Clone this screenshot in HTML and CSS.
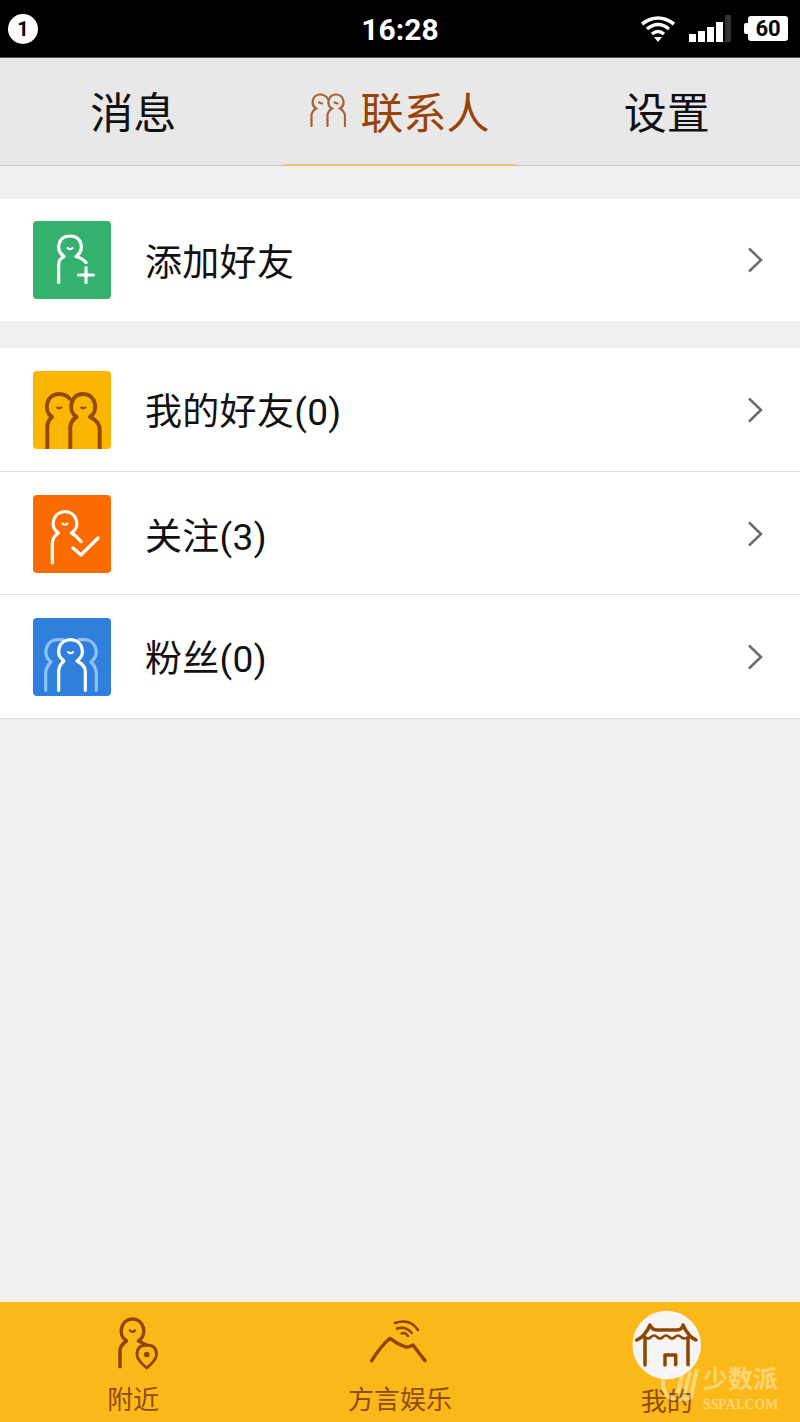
FILE: index.html
```html
<!DOCTYPE html>
<html lang="zh-CN">
<head>
    <meta charset="UTF-8">
    <meta name="viewport" content="width=device-width, initial-scale=1.0">
    <title>联系人</title>
    <link rel="stylesheet" href="styles.css">
</head>
<body>
    <div class="status">
        <span class="badge">1</span>
        <span class="time">16:28</span>
        <div class="status-right">
            <svg class="wifi" width="36" height="28" viewBox="0 0 36 28">
                <path d="M2 9 Q18 -3 34 9 M7 14 Q18 5 29 14 M12 19 Q18 14 24 19" />
                <path class="wifi-dot" d="M14 22 H22 L18 27 Z" />
            </svg>
            <div class="signal">
                <i class="bar1"></i><i class="bar2"></i><i class="bar3"></i><i class="bar4"></i><i class="bar5"></i>
            </div>
            <div class="battery"><span>60</span></div>
        </div>
    </div>

    <div class="tabs">
        <div class="tab">消息</div>
        <div class="tab active">
            <svg class="tab-icon" width="36" height="34" viewBox="0 0 36 34">
                <path d="M1.5 33 V22 Q2 18 6 15.5 C0.5 12 2 1.5 10 1.5 C14 1.5 16.5 3.5 18 6" />
                <path d="M17.5 33 V22 Q18 18 22 15.5 C16 12 18 1.5 26 1.5 C34 1.5 36 12 30 15.5 Q34.5 18 35 23 V33" />
                <path d="M9 9.5 L12 10.5 M24.5 9.5 L27.5 10.5" />
            </svg>
            联系人
        </div>
        <div class="tab">设置</div>
    </div>

    <main class="content">
        <div class="group first">
            <div class="row single">
                <div class="row-icon green">
                    <svg width="78" height="78" viewBox="0 0 78 78">
                        <path d="M25.7 61.5 V43 Q26 38 31 35.5 C22 29 25 15 37 15 C49 15 52 29 43 35.5 Q50 37.5 53 41.5" />
                        <path d="M53 46.5 V61.5 M45.5 54 H60.5" />
                        <path class="thin" d="M34.5 27 Q37 29.5 39.5 27" />
                    </svg>
                </div>
                <span class="row-text">添加好友</span>
                <svg class="chevron" width="16" height="26" viewBox="0 0 16 26"><path d="M2 1.5 L14 13 L2 24.5" /></svg>
            </div>
        </div>

        <div class="group">
            <div class="row">
                <div class="row-icon yellow">
                    <svg width="78" height="78" viewBox="0 0 78 78">
                        <path d="M14.3 78 V56 Q14.5 50 19 46 C10 40 13 23 26 23 C31 23 35 25 37.5 29" />
                        <path d="M37.3 78 V56 Q37.5 50 43.5 46 C34.5 40 37 23 50 23 C63 23 66 40 57 46 Q66 50 66.7 58 V78" />
                        <path class="thin" d="M23.5 36 Q26 38.5 29 36 M47.5 36 Q50 38.5 53 36" />
                    </svg>
                </div>
                <span class="row-text">我的好友(0)</span>
                <svg class="chevron" width="16" height="26" viewBox="0 0 16 26"><path d="M2 1.5 L14 13 L2 24.5" /></svg>
            </div>
            <div class="row short">
                <div class="row-icon orange">
                    <svg width="78" height="78" viewBox="0 0 78 78">
                        <path d="M19.3 68 V48 Q19.5 42 25.5 38 C16 32 20 16.7 32 16.7 C44 16.7 48 32 38.5 38 Q44 41 48 46.7" />
                        <path d="M40 53 L48 60 L65 43" />
                        <path class="thin" d="M29.5 28.5 Q32 31 34.5 28.5" />
                    </svg>
                </div>
                <span class="row-text">关注(3)</span>
                <svg class="chevron" width="16" height="26" viewBox="0 0 16 26"><path d="M2 1.5 L14 13 L2 24.5" /></svg>
            </div>
            <div class="row">
                <div class="row-icon blue">
                    <svg width="78" height="78" viewBox="0 0 78 78">
                        <path class="back" d="M12.7 72.3 V55 Q13 49 18 44 C8 36 14 21.7 24 21.7 H30" />
                        <path class="back" d="M63.3 72.3 V55 Q63 49 58 44 C68 36 62 21.7 52 21.7 H46" />
                        <path d="M25.7 72.3 V53 Q26 47 31 43 C21.5 36 25.5 21.7 37.5 21.7 C49.5 21.7 53.5 36 44 43 Q52 47 52.3 53 V72.3" />
                        <path class="thin" d="M35 34 Q37.5 36.5 40 34" />
                    </svg>
                </div>
                <span class="row-text">粉丝(0)</span>
                <svg class="chevron" width="16" height="26" viewBox="0 0 16 26"><path d="M2 1.5 L14 13 L2 24.5" /></svg>
            </div>
        </div>
    </main>

    <nav class="bottom">
        <div class="nav-item">
            <svg class="nav-icon" width="90" height="74" viewBox="0 0 90 74">
                <path d="M32 56.7 V40 Q32.5 35 38.5 31 C29 25 33 9 44.5 9 C56 9 60 25 50.5 31 Q55 33 58 35" />
                <path class="pin" d="M58.7 58 Q49 50 49 44.5 Q49 35 58.7 35 Q68.5 35 68.5 44.5 Q68.5 50 58.7 58 Z" />
                <circle class="dot" cx="58.7" cy="44.5" r="2.8" />
                <path class="thin" d="M42 20.5 Q44.3 23 47 20.5" />
            </svg>
            <span class="nav-label">附近</span>
        </div>
        <div class="nav-item">
            <svg class="nav-icon" width="90" height="74" viewBox="0 0 90 74">
                <path d="M16.7 50.7 Q25 37 35 28.3 Q42 34 50 36.7 Q54 37.5 58 35 Q64 43 70 50.7" />
                <path class="thin" d="M40 13 Q55 8 63 20 M42 18.5 Q51 16 56.7 23 M46.7 23.5 Q50 22 53 26" />
            </svg>
            <span class="nav-label">方言娱乐</span>
        </div>
        <div class="nav-item current">
            <svg class="nav-icon" width="90" height="74" viewBox="0 0 90 74">
                <circle class="disc" cx="44.7" cy="35" r="34.3" />
                <path d="M14.7 30 Q21 27 23 23.3 Q26 20 28 15 Q30 20 35 20 H55 Q60 20 61 15 Q63 20 66 23.3 Q68 27 74 30" />
                <path d="M23 28 V55 M66 28 V55 M43 55 V45 H53.7 V55" />
                <path class="thin" d="M23 27 Q26 30 29 27 T35 27 T41 27 T47 27 T53 27 T59 27 T66 27" />
            </svg>
            <span class="nav-label">我的</span>
        </div>

        <div class="watermark">
            <svg class="mark-logo" width="38" height="36" viewBox="0 0 38 36">
                <path d="M28 3 Q18 0 10 5 Q1 11 2 21 Q3 31 14 35" />
                <path d="M22 7 L16 31 M29 7 L23 31 M36 4 L30 32 Q24 35 18 34" />
            </svg>
            <div class="mark-text">
                <span class="mark-cn">少数派</span>
                <span class="mark-en">SSPAI.COM</span>
            </div>
        </div>
    </nav>
</body>
</html>
```

FILE: styles.css
```css
* {
    box-sizing: border-box;
}
html, body {
    height: 100%;
}
body {
    margin: 0;
    display: flex;
    flex-direction: column;
    background-color: #f0f0f0;
    font-family: Roboto, "Noto Sans CJK SC", sans-serif;
    color: #111;
}

/* status bar */
.status {
    height: 58px;
    flex-shrink: 0;
    background: #000;
    border-bottom: 1px solid #555;
    display: grid;
    grid-template-columns: 1fr auto 1fr;
    align-items: center;
    padding: 0 12px 0 8px;
    color: #fff;
}
.badge {
    width: 30px;
    height: 30px;
    border-radius: 50%;
    background: #fff;
    color: #000;
    font-size: 20px;
    font-weight: 700;
    line-height: 30px;
    text-align: center;
}
.time {
    font-size: 30px;
    font-weight: 700;
    line-height: 34px;
    margin: 2px 0 0 4px;
}
.status-right {
    justify-self: end;
    display: flex;
    align-items: center;
    gap: 13px;
}
.wifi {
    fill: none;
    stroke: #fff;
    stroke-width: 3.5;
}
.wifi .wifi-dot {
    fill: #fff;
    stroke: none;
}
.signal {
    display: flex;
    align-items: flex-end;
    gap: 2.5px;
    height: 27px;
}
.signal i {
    display: block;
    width: 6.5px;
    background: #fff;
}
.signal .bar1 { height: 8px; }
.signal .bar2 { height: 11px; }
.signal .bar3 { height: 15px; }
.signal .bar4 { height: 20px; }
.signal .bar5 { height: 27px; width: 6px; background: #333; }
.battery {
    width: 40px;
    height: 25px;
    margin-left: 4px;
    position: relative;
    background: #fff;
    border-radius: 3px;
    color: #000;
    font-size: 22px;
    font-weight: 700;
    line-height: 25px;
    text-align: center;
}
.battery::before {
    content: "";
    position: absolute;
    left: -4px;
    top: 7px;
    width: 4px;
    height: 11px;
    background: #fff;
    border-radius: 2px 0 0 2px;
}

/* top tabs */
.tabs {
    height: 108px;
    flex-shrink: 0;
    display: grid;
    grid-template-columns: repeat(3, 1fr);
    background: #e8e8e8;
    border-bottom: 1px solid #c6c6c6;
}
.tab {
    display: flex;
    align-items: center;
    justify-content: center;
    gap: 14px;
    font-size: 43px;
    color: #111;
    padding-bottom: 3px;
}
.tab.active {
    margin: 0 17px -1px;
    color: #9a4309;
    border-bottom: 2px solid #eec268;
}
.tab-icon {
    fill: none;
    stroke: #ab6230;
    stroke-width: 2.2;
    stroke-linecap: round;
}

/* list */
.content {
    flex: 1;
}
.group {
    margin-top: 27px;
    background: #fff;
}
.group.first {
    margin-top: 33px;
}
.row {
    height: 124px;
    padding: 0 37px 0 33px;
    display: flex;
    align-items: center;
    background: #fff;
    border-bottom: 1px solid #dedede;
}
.row.short {
    height: 123px;
    padding-top: 2px;
}
.row.single {
    height: 122px;
    border-bottom: 0;
}
.row-icon {
    width: 78px;
    height: 78px;
    border-radius: 4px;
    overflow: hidden;
    flex-shrink: 0;
}
.row-icon svg {
    display: block;
    fill: none;
    stroke: #fff;
    stroke-width: 3.2;
    stroke-linecap: round;
    stroke-linejoin: round;
}
.row-icon .thin {
    stroke-width: 2;
}
.green { background: #34b16c; }
.orange { background: #fb6c00; }
.blue { background: #2f80dc; }
.yellow { background: #fab600; }
.yellow svg {
    stroke: #964a0a;
    stroke-width: 4;
    stroke-linecap: butt;
}
.blue .back {
    stroke: #8cc0f6;
}
.row-text {
    flex: 1;
    margin: 7px 0 0 34px;
    font-size: 37px;
    letter-spacing: 0.3px;
    line-height: 44px;
    color: #111;
}
.chevron {
    fill: none;
    stroke: #6b6b6b;
    stroke-width: 2.5;
    flex-shrink: 0;
}

/* bottom nav */
.bottom {
    height: 120px;
    flex-shrink: 0;
    position: relative;
    display: grid;
    grid-template-columns: repeat(3, 1fr);
    background: #fbb919;
}
.nav-item {
    display: flex;
    flex-direction: column;
    align-items: center;
    padding-top: 8px;
}
.nav-icon {
    display: block;
    fill: none;
    stroke: #8f4400;
    stroke-width: 3.5;
    stroke-linecap: round;
    stroke-linejoin: round;
}
.nav-icon .thin {
    stroke-width: 2.5;
}
.nav-icon .pin {
    stroke-width: 2.8;
}
.nav-icon .dot {
    fill: #8f4400;
    stroke: none;
}
.nav-icon .disc {
    fill: #f6f5f3;
    stroke: none;
}
.nav-label {
    font-size: 26px;
    line-height: 30px;
    margin-top: 1px;
    color: #8f4c0a;
}
.current .nav-label {
    margin-top: 3px;
}
.watermark {
    position: absolute;
    left: 661px;
    top: 60px;
    display: flex;
    align-items: flex-start;
    gap: 4px;
    color: rgba(255, 255, 255, 0.42);
}
.mark-logo {
    margin-top: 3px;
    fill: none;
    stroke: rgba(255, 255, 255, 0.42);
    stroke-width: 4;
}
.mark-text {
    display: flex;
    flex-direction: column;
    align-items: center;
}
.mark-cn {
    font-size: 25px;
    line-height: 36px;
    font-weight: 700;
}
.mark-en {
    font-family: "Liberation Serif", serif;
    font-size: 13.8px;
    font-weight: 700;
    line-height: 13px;
}
```
